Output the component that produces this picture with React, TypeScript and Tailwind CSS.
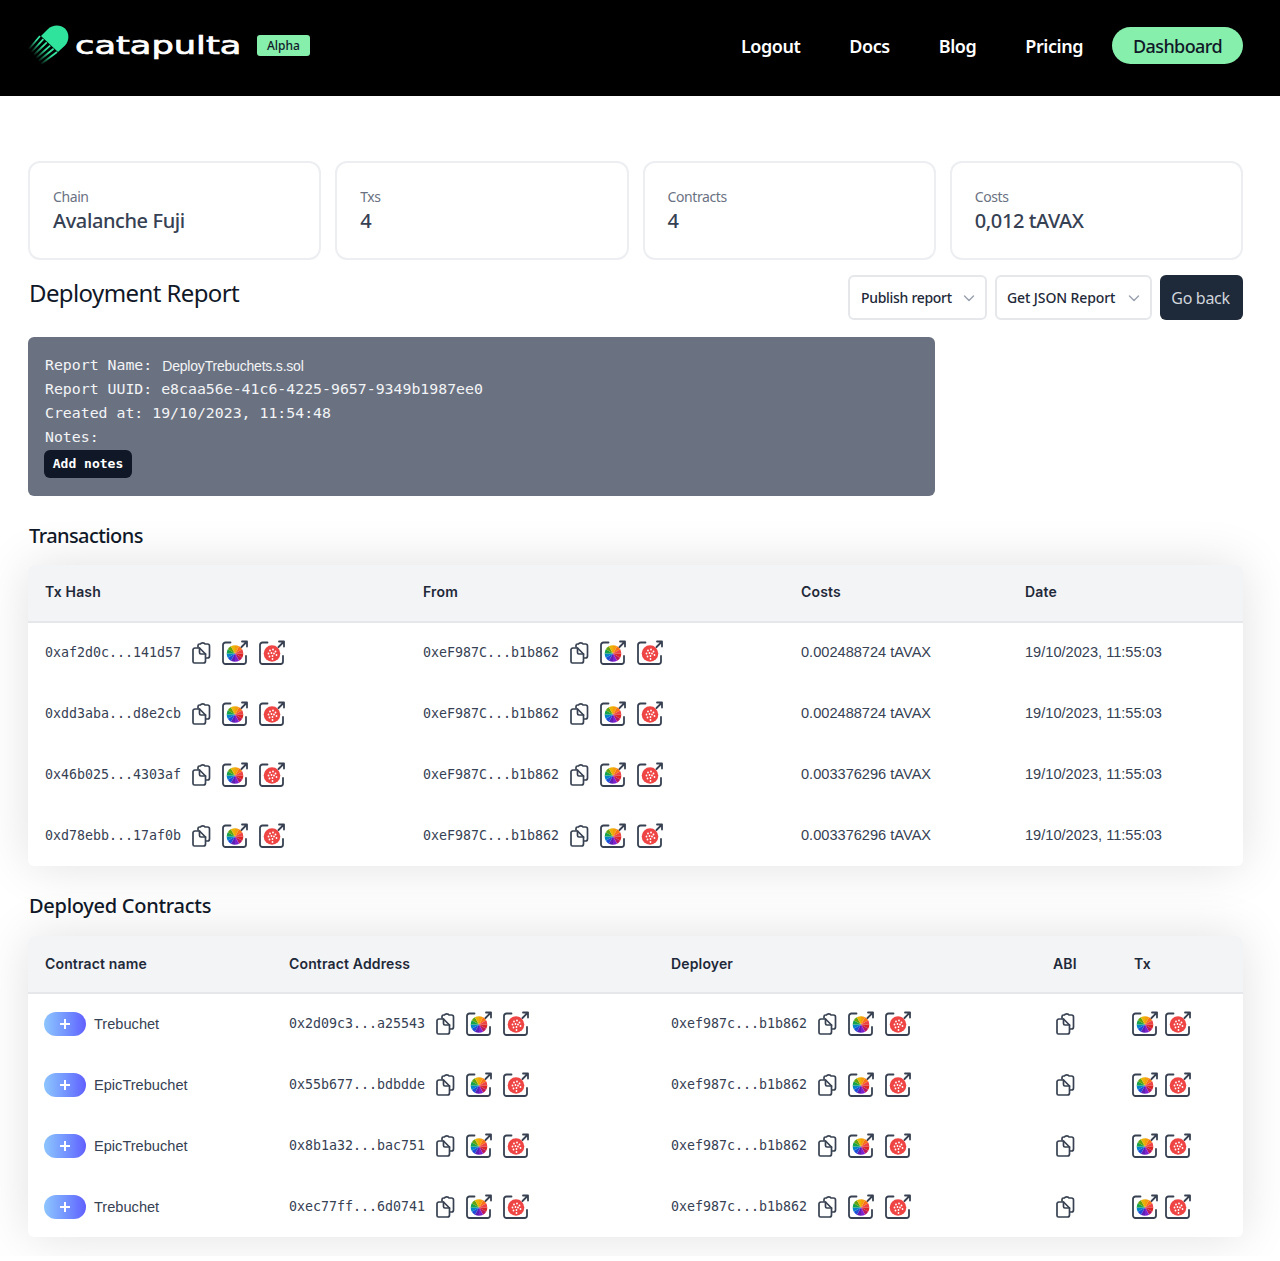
import React from 'react';

const SANS = "font-['Noto_Sans',sans-serif]";
const MONO = "font-['DejaVu_Sans_Mono',monospace]";
const BODY = "font-['Liberation_Sans',sans-serif]";

const wheelColors = ['#f59e0b', '#f97316', '#ef4444', '#dc2626', '#be185d', '#7e22ce', '#5b21b6', '#1d4ed8', '#0284c7', '#16a34a', '#65a30d', '#eab308'];

function Wedge({ i, cx, cy, r }: { i: number; cx: number; cy: number; r: number }) {
  const a0 = (i * 30 * Math.PI) / 180;
  const a1 = ((i + 1) * 30 * Math.PI) / 180;
  const x0 = cx + r * Math.sin(a0);
  const y0 = cy - r * Math.cos(a0);
  const x1 = cx + r * Math.sin(a1);
  const y1 = cy - r * Math.cos(a1);
  return <path d={`M${cx} ${cy}L${x0} ${y0}A${r} ${r} 0 0 1 ${x1} ${y1}Z`} fill={wheelColors[i]} />;
}

function Frame({ children }: { children: React.ReactNode }) {
  return (
    <svg width="28" height="28" viewBox="0 0 28 28" fill="none" className="shrink-0">
      <path d="M8.500 3.500H3.500A2.500 2.500 0 0 0 1 6V22.500A2.500 2.500 0 0 0 3.500 25H21.500A2.500 2.500 0 0 0 24 22.500V17" stroke="#374151" strokeWidth="1.800" strokeLinecap="round" />
      {children}
      <path d="M19.500 8L25 2.500M20 2.500H25V7.500" stroke="#374151" strokeWidth="1.800" strokeLinecap="round" strokeLinejoin="round" />
    </svg>
  );
}

function ScanIcon() {
  return (
    <Frame>
      {wheelColors.map((_, i) => (
        <Wedge key={i} i={i} cx={13} cy={14.500} r={8.300} />
      ))}
    </Frame>
  );
}

function NodeIcon() {
  const dots = [[11, 11.500], [14, 10.500], [16.500, 12.500], [9.500, 14.500], [12.500, 14], [15, 14.500], [17.500, 16], [10.500, 17.500], [13.500, 17], [13.500, 20]];
  return (
    <Frame>
      <circle cx="13" cy="14.500" r="8.300" fill="#ef4444" />
      {dots.map(([x, y], i) => (
        <circle key={i} cx={x} cy={y} r="0.900" fill="#fff" />
      ))}
    </Frame>
  );
}

function CopyIcon() {
  return (
    <svg width="22" height="24" viewBox="0 0 22 24" fill="none" stroke="#374151" strokeWidth="1.700" strokeLinecap="round" strokeLinejoin="round" className="shrink-0">
      <path d="M8 6V4.500A1.500 1.500 0 0 1 9.500 3H10.500C11 1.500 14.500 1.500 15 3H17.500A2 2 0 0 1 19.500 5V15A2 2 0 0 1 17.500 17H16" />
      <path d="M3 9.500V20.500A1.500 1.500 0 0 0 4.500 22H13.500A2 2 0 0 0 15.500 20V13L9.500 7H5A2 2 0 0 0 3 9.500Z" />
      <path d="M9.500 7V11.500A1.500 1.500 0 0 0 11 13H15.500" />
    </svg>
  );
}

function Hash({ value }: { value: string }) {
  return (
    <div className="flex items-center">
      <span className={`${MONO} w-[136px] text-[13.300px] leading-[20px] text-gray-700`}>{value}</span>
      <span className="ml-[9px] mr-[10px] flex"><CopyIcon /></span>
      <ScanIcon />
      <span className="ml-[9px] flex"><NodeIcon /></span>
    </div>
  );
}

function Logo() {
  return (
    <svg width="42" height="42" viewBox="0 0 42 42" className="shrink-0">
      <defs>
        <linearGradient id="tail" x1="1" y1="0" x2="0" y2="1">
          <stop offset="0.300" stopColor="#34e6a0" />
          <stop offset="1" stopColor="#34e6a0" stopOpacity="0.050" />
        </linearGradient>
      </defs>
      <path d="M20 4C24 0 32 -1 37 3.500C42 9 41 16 37 20.500L30 27L13 11Z" fill="#2fe39d" />
      {[0, 1, 2, 3, 4, 5].map((i) => (
        <line key={i} x1={12 + i * 3.400} y1={11 + i * 3.200} x2={1 + i * 2.400} y2={24 + i * 3} stroke="url(#tail)" strokeWidth="1.800" />
      ))}
    </svg>
  );
}

function Stat({ label, value }: { label: string; value: string }) {
  return (
    <div className="h-[99px] rounded-xl border-2 border-[#eceef1] bg-white px-[23px] pt-[24px]">
      <div className="text-sm leading-[20px] tracking-[-0.400px] text-gray-500">{label}</div>
      <div className="text-xl leading-[28px] font-medium tracking-[-0.400px] text-gray-700">{value}</div>
    </div>
  );
}

function Chevron() {
  return (
    <svg width="12" height="12" viewBox="0 0 12 12" fill="none" stroke="#9ca3af" strokeWidth="1.500" strokeLinecap="round" strokeLinejoin="round">
      <path d="M1.500 4L6 8.500L10.500 4" />
    </svg>
  );
}

const txs = [
  ['0xaf2d0c...141d57', '0.002488724 tAVAX'],
  ['0xdd3aba...d8e2cb', '0.002488724 tAVAX'],
  ['0x46b025...4303af', '0.003376296 tAVAX'],
  ['0xd78ebb...17af0b', '0.003376296 tAVAX'],
];

const contracts = [
  ['Trebuchet', '0x2d09c3...a25543'],
  ['EpicTrebuchet', '0x55b677...bdbdde'],
  ['EpicTrebuchet', '0x8b1a32...bac751'],
  ['Trebuchet', '0xec77ff...6d0741'],
];

const thClass = "h-[57px] px-[17px] text-left text-sm font-semibold tracking-[0.150px] text-gray-800 font-['Inter',sans-serif]";

export default function App() {
  return (
    <div className={`${SANS} h-[1256px] overflow-hidden bg-white`}>
      <nav className="flex h-24 items-center bg-black pl-[28px] pr-[37px]">
        <span className="-mt-1 flex"><Logo /></span>
        <span className="ml-[5px] -mt-[5px] inline-block w-[165px] origin-left scale-x-[1.410] font-['DejaVu_Sans',sans-serif] text-[25px] [-webkit-text-stroke:0.700px_white] text-white">catapulta</span>
        <span className="ml-[17px] -mt-[5px] rounded-[3px] bg-[#86efac] px-[10px] text-xs leading-[21px] font-medium text-gray-900">Alpha</span>
        <div className="ml-auto -mt-[5px] flex items-center text-lg font-semibold tracking-[-0.450px] text-white">
          <a className="mr-[49px]">Logout</a>
          <a className="mr-[49px]">Docs</a>
          <a className="mr-[49px]">Blog</a>
          <a className="mr-[29px]">Pricing</a>
          <a className="flex h-[37px] w-[131px] items-center justify-center rounded-full bg-[#86efac] font-medium tracking-[-0.600px] text-gray-900">Dashboard</a>
        </div>
      </nav>

      <main className="pl-[28px] pr-[37px] pt-[65px]">
        <div className="grid grid-cols-4 gap-[14px]">
          <Stat label="Chain" value="Avalanche Fuji" />
          <Stat label="Txs" value="4" />
          <Stat label="Contracts" value="4" />
          <Stat label="Costs" value="0,012 tAVAX" />
        </div>

        <div className="mt-[15px] flex items-start justify-between">
          <h1 className="mt-[2px] pl-px text-2xl leading-[32px] tracking-[-0.600px] text-gray-900">Deployment Report</h1>
          <div className="flex items-center text-sm font-medium tracking-[-0.300px] text-gray-800">
            <button className="flex h-[45px] w-[139px] items-center justify-between rounded-md border-2 border-gray-200 bg-white pl-[11px] pr-[10px]">
              Publish report <Chevron />
            </button>
            <button className="ml-2 flex h-[45px] w-[157px] items-center justify-between rounded-md border-2 border-gray-200 bg-white pl-[10px] pr-[10px] tracking-[-0.100px]">
              Get JSON Report <Chevron />
            </button>
            <button className="ml-2 flex h-[45px] w-[83px] items-center justify-center rounded-md bg-gray-800 pr-[2px] text-base font-normal text-gray-300">Go back</button>
          </div>
        </div>

        <div className={`${MONO} mt-[17px] h-[159px] w-[907px] rounded-md bg-gray-500 px-[17px] pt-[16px] text-[14.850px] leading-[24px] text-gray-100`}>
          <div className="flex">
            Report Name:
            <span className={`${BODY} ml-[10px] text-sm leading-[26px] tracking-[-0.200px]`}>DeployTrebuchets.s.sol</span>
          </div>
          <div className="-mt-[2px]">Report UUID: e8caa56e-41c6-4225-9657-9349b1987ee0</div>
          <div>Created at: 19/10/2023, 11:54:48</div>
          <div>Notes:</div>
          <button className="-ml-px mt-[1px] flex h-[28px] w-[88px] items-center justify-center rounded-md bg-gray-900 text-[13px] font-bold text-white">Add notes</button>
        </div>

        <h2 className="mt-[24px] pl-px text-xl leading-[32px] font-medium tracking-[-0.580px] text-gray-900">Transactions</h2>
        <div className="mt-[13px] overflow-hidden rounded-md bg-white shadow-[0_0_50px_rgba(0,0,0,0.12)]">
          <table className={`${BODY} w-full table-fixed text-[14.600px] text-gray-700`}>
            <thead>
              <tr className="border-b-2 border-gray-200 bg-gray-100">
                <th className={`${thClass} w-[378px] pb-[2px]`}>Tx Hash</th>
                <th className={`${thClass} w-[378px] pb-[2px]`}>From</th>
                <th className={`${thClass} w-[224px] pb-[2px]`}>Costs</th>
                <th className={`${thClass} pb-[2px]`}>Date</th>
              </tr>
            </thead>
            <tbody>
              {txs.map(([hash, cost]) => (
                <tr key={hash} className="h-[61px]">
                  <td className="px-[17px]"><Hash value={hash} /></td>
                  <td className="px-[17px]"><Hash value="0xeF987C...b1b862" /></td>
                  <td className="px-[17px]">{cost}</td>
                  <td className="px-[17px]">19/10/2023, 11:55:03</td>
                </tr>
              ))}
            </tbody>
          </table>
        </div>

        <h2 className="mt-[24px] pl-px text-xl leading-[32px] font-medium tracking-[-0.280px] text-gray-900">Deployed Contracts</h2>
        <div className="mt-[14px] overflow-hidden rounded-md bg-white shadow-[0_0_50px_rgba(0,0,0,0.12)]">
          <table className={`${BODY} w-full table-fixed text-[14.600px] text-gray-700`}>
            <thead>
              <tr className="border-b-2 border-gray-200 bg-gray-100">
                <th className={`${thClass} w-[244px]`}>Contract name</th>
                <th className={`${thClass} w-[382px]`}>Contract Address</th>
                <th className={`${thClass} w-[382px]`}>Deployer</th>
                <th className={`${thClass} w-[81px]`}>ABI</th>
                <th className={thClass}>Tx</th>
              </tr>
            </thead>
            <tbody>
              {contracts.map(([name, address]) => (
                <tr key={address} className="h-[61px]">
                  <td className="px-[16px]">
                    <div className="flex items-center">
                      <button className="flex h-[24px] w-[42px] items-center justify-center rounded-full bg-gradient-to-r from-blue-300 to-indigo-500 text-white">
                        <svg width="12" height="12" viewBox="0 0 12 12" stroke="#fff" strokeWidth="2"><path d="M6 1V11M1 6H11" /></svg>
                      </button>
                      <span className="ml-2 pt-[2px]">{name}</span>
                    </div>
                  </td>
                  <td className="px-[17px]"><Hash value={address} /></td>
                  <td className="px-[17px]"><Hash value="0xef987c...b1b862" /></td>
                  <td className="pl-[18px]"><CopyIcon /></td>
                  <td className="pl-[15px]">
                    <div className="flex items-center gap-[5px]">
                      <ScanIcon />
                      <NodeIcon />
                    </div>
                  </td>
                </tr>
              ))}
            </tbody>
          </table>
        </div>
      </main>
    </div>
  );
}
